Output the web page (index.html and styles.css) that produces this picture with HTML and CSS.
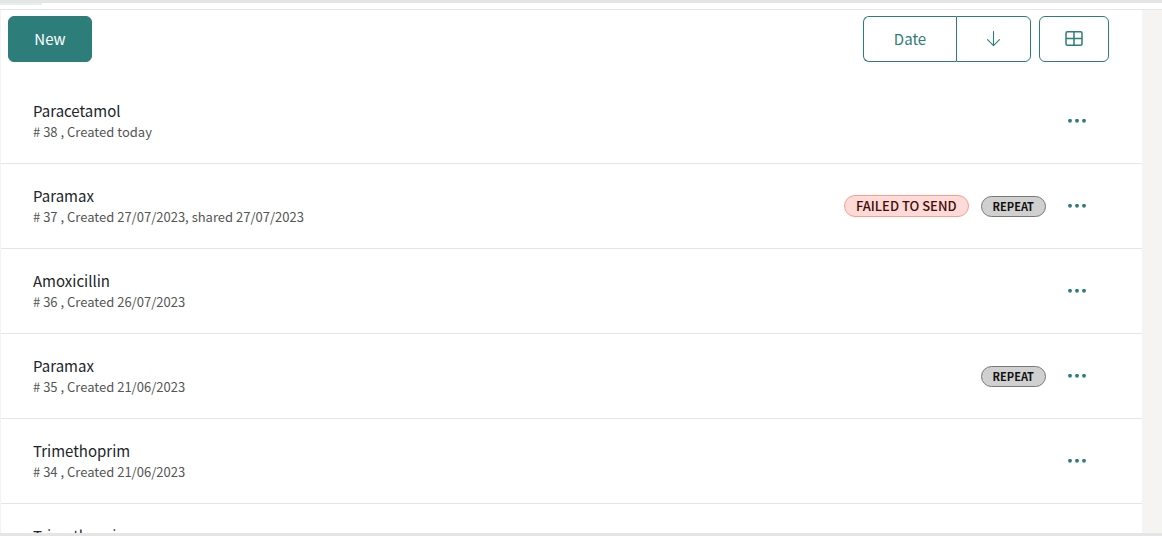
FILE: index.html
```html
<!DOCTYPE html>
<html lang="en">
<head>
<meta charset="utf-8">
<meta name="viewport" content="width=device-width, initial-scale=1">
<title>Prescriptions</title>
<link rel="stylesheet" href="styles.css">
</head>
<body>
<div class="window">
  <header class="tabs"><span class="tab-active"></span></header>
  <div class="viewport">
    <main class="panel">
      <div class="toolbar">
        <button class="btn btn-primary" type="button">New</button>
        <div class="tools">
          <div class="btn-group">
            <button class="btn btn-outline btn-sort" type="button">Date</button>
            <button class="btn btn-outline btn-direction" type="button" aria-label="Sort descending">
              <svg width="16" height="16" viewBox="0 0 16 16" fill="none" stroke="currentColor" stroke-width="1.1" stroke-linecap="round" stroke-linejoin="round"><path d="M7.5 .6v14M1.5 8.6l6 6 6-6"/></svg>
            </button>
          </div>
          <button class="btn btn-outline btn-view" type="button" aria-label="Table view">
            <svg width="18" height="16" viewBox="0 0 18 16" fill="none" stroke="currentColor" stroke-width="1.5"><rect x="1" y=".8" width="16" height="13.5" rx="1.5"/><path d="M9 .8v13.5M1 7.5h16"/></svg>
          </button>
        </div>
      </div>
      <ul class="list">
        <li class="row">
          <div class="info"><div class="name">Paracetamol</div><div class="meta"># 38 , Created today</div></div>
          <button class="more" type="button" aria-label="More"><svg width="18" height="4" viewBox="0 0 18 4" fill="currentColor"><circle cx="2" cy="1.8" r="1.9"/><circle cx="9" cy="1.8" r="1.9"/><circle cx="16" cy="1.8" r="1.9"/></svg></button>
        </li>
        <li class="row">
          <div class="info"><div class="name">Paramax</div><div class="meta"># 37 , Created 27/07/2023, shared 27/07/2023</div></div>
          <span class="badge badge-failed">FAILED TO SEND</span>
          <span class="badge badge-repeat">REPEAT</span>
          <button class="more" type="button" aria-label="More"><svg width="18" height="4" viewBox="0 0 18 4" fill="currentColor"><circle cx="2" cy="1.8" r="1.9"/><circle cx="9" cy="1.8" r="1.9"/><circle cx="16" cy="1.8" r="1.9"/></svg></button>
        </li>
        <li class="row">
          <div class="info"><div class="name">Amoxicillin</div><div class="meta"># 36 , Created 26/07/2023</div></div>
          <button class="more" type="button" aria-label="More"><svg width="18" height="4" viewBox="0 0 18 4" fill="currentColor"><circle cx="2" cy="1.8" r="1.9"/><circle cx="9" cy="1.8" r="1.9"/><circle cx="16" cy="1.8" r="1.9"/></svg></button>
        </li>
        <li class="row">
          <div class="info"><div class="name">Paramax</div><div class="meta"># 35 , Created 21/06/2023</div></div>
          <span class="badge badge-repeat">REPEAT</span>
          <button class="more" type="button" aria-label="More"><svg width="18" height="4" viewBox="0 0 18 4" fill="currentColor"><circle cx="2" cy="1.8" r="1.9"/><circle cx="9" cy="1.8" r="1.9"/><circle cx="16" cy="1.8" r="1.9"/></svg></button>
        </li>
        <li class="row">
          <div class="info"><div class="name">Trimethoprim</div><div class="meta"># 34 , Created 21/06/2023</div></div>
          <button class="more" type="button" aria-label="More"><svg width="18" height="4" viewBox="0 0 18 4" fill="currentColor"><circle cx="2" cy="1.8" r="1.9"/><circle cx="9" cy="1.8" r="1.9"/><circle cx="16" cy="1.8" r="1.9"/></svg></button>
        </li>
        <li class="row">
          <div class="info"><div class="name">Trimethoprim</div></div>
        </li>
      </ul>
    </main>
  </div>
</div>
</body>
</html>
```
FILE: styles.css
```css
* { box-sizing: border-box; }

body {
  margin: 0;
  font-family: "Noto Sans CJK SC", "Noto Sans", sans-serif;
  font-size: 15px;
  color: #212529;
  background: #fff;
}

.window {
  display: flex;
  flex-direction: column;
  height: 100vh;
  border-top: 3px solid #e5e5e5;
  border-bottom: 3px solid #e5e5e5;
  overflow: hidden;
}

.tabs {
  flex: none;
  height: 7px;
  border-bottom: 1px solid #e6e6e6;
}

.tab-active {
  display: block;
  width: 42px;
  height: 2px;
  background: #dff1ea;
}

.viewport {
  flex: 1;
  min-height: 0;
  padding-right: 20px;
  background: #f5f4f2;
  overflow: hidden;
}

.panel {
  min-height: 100%;
  border-left: 1px solid #f3f3f3;
  background: #fff;
}

.toolbar {
  display: flex;
  justify-content: space-between;
  padding: 6px 33px 17px 7px;
}

.tools { display: flex; gap: 8px; }
.btn-group { display: flex; }

.btn {
  display: flex;
  align-items: center;
  justify-content: center;
  height: 46px;
  padding: 0;
  border: 1px solid #2d7d7b;
  border-radius: 6px;
  font: inherit;
  line-height: 24px;
}

.btn-primary { width: 84px; background: #2d7d7b; color: #fff; }
.btn-outline { background: #fff; color: #2d7d7b; }
.btn-sort { width: 93px; border-right: 0; border-radius: 6px 0 0 6px; }
.btn-direction { width: 75px; border-radius: 0 6px 6px 0; }
.btn-view { width: 70px; }

.list { margin: 0; padding: 0; list-style: none; }

.row {
  display: flex;
  align-items: center;
  padding: 20px 56px 20px 32px;
  border-bottom: 1px solid #e6e6e6;
}

.info { flex: 1; }
.name { line-height: 24px; }
.meta { padding-bottom: 2px; font-size: 13px; line-height: 18px; color: #555; }

.badge {
  margin-right: 12px;
  padding: 0 11px;
  border: 1px solid;
  border-radius: 11px;
  line-height: 20px;
}

.badge-failed {
  border-color: #ff9c90;
  background: #ffdad6;
  color: #410e0b;
  font-size: 13px;
  font-weight: 500;
}

.badge-repeat {
  margin-right: 22px;
  border-color: #777;
  background: #d0d0d0;
  color: #111;
  font-size: 11px;
  font-weight: 700;
  line-height: 19px;
}

.more {
  display: flex;
  padding: 8px 0;
  border: 0;
  background: none;
  color: #2d7d7b;
}
```
